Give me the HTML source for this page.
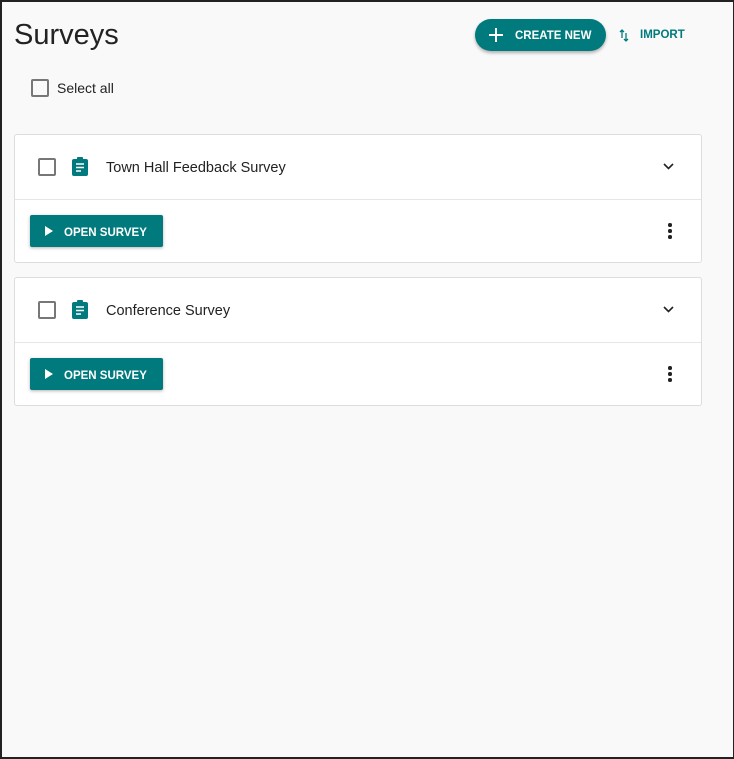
<!DOCTYPE html>
<html><head><style>
html,body{margin:0;padding:0}
body{width:734px;height:759px;background:#f9f9f9;font-family:"Liberation Sans",sans-serif;position:relative;overflow:hidden;color:#222}
.frame{position:absolute;left:0;top:0;width:734px;height:759px;box-sizing:border-box;border:2px solid #222;border-right-width:1px;pointer-events:none}
.abs{position:absolute}
h1{position:absolute;left:14px;top:19px;margin:0;font-weight:400;font-size:29px;color:#222}
.create{left:475px;top:19px;width:131px;height:32px;background:#007a7c;border-radius:16px;color:#fff;font-size:11.5px;font-weight:700;box-shadow:0 2px 3px rgba(0,0,0,.3)}
.create span{position:absolute;left:40px;top:10.5px}
.imp{top:29px;color:#007a7c;font-size:11.5px;font-weight:700}
.cb{width:14px;height:14px;border:2px solid #777;border-radius:2px;box-sizing:content-box}
.card{left:14px;width:686px;height:127px;background:#fff;border:1px solid #ddd;border-radius:3px}
.card .sep{position:absolute;left:0;right:0;top:64px;border-top:1px solid #e6e6e6}
.title{position:absolute;left:91px;top:25px;font-size:14.5px}
.open{position:absolute;left:15px;top:80px;width:133px;height:32px;background:#007a7c;border-radius:2px;color:#fff;font-size:11.5px;font-weight:700;box-shadow:0 1px 3px rgba(0,0,0,.3)}
.open span{position:absolute;left:34px;top:11.5px}
.dots{position:absolute;left:653px;top:88px;width:4px}
.dots i{display:block;width:3.5px;height:3.5px;background:#222;border-radius:50%;margin-bottom:2.5px}
</style></head><body>
<h1>Surveys</h1>
<div class="abs create"><svg class="abs" style="left:14px;top:9px" width="14" height="14"><path d="M7 0v14M0 7h14" stroke="#fff" stroke-width="2"/></svg><span>CREATE NEW</span></div>
<svg class="abs" style="left:619px;top:29px" width="10" height="13"><path d="M3 1v8M1 3l2-2 2 2M7 12V4M5 10l2 2 2-2" stroke="#007a7c" stroke-width="1.3" fill="none"/></svg>
<div class="abs imp" style="left:640px">IMPORT</div>
<div class="abs cb" style="left:31px;top:79px"></div>
<div class="abs" style="left:57px;top:80px;font-size:14px">Select all</div>

<div class="abs card" style="top:134px">
 <div class="abs cb" style="left:23px;top:23px"></div>
 <svg class="abs" style="left:56px;top:21px" width="18" height="20" viewBox="0 0 18 20"><rect x="1" y="3" width="16" height="17" rx="2" fill="#007a7c"/><rect x="6" y="1" width="6" height="4" rx="1" fill="#007a7c"/><path d="M5 8h8M5 11.5h8M5 15h5" stroke="#fff" stroke-width="1.6"/></svg>
 <div class="title">Town Hall Feedback Survey</div>
 <svg class="abs" style="left:648px;top:28px" width="11" height="8"><path d="M1 1l4.5 4.5L10 1" stroke="#222" stroke-width="1.6" fill="none"/></svg>
 <div class="sep"></div>
 <div class="open"><svg class="abs" style="left:15px;top:11px" width="8" height="10"><path d="M0 0l8 5-8 5z" fill="#fff"/></svg><span>OPEN SURVEY</span></div>
 <div class="dots"><i></i><i></i><i></i></div>
</div>

<div class="abs card" style="top:277px">
 <div class="abs cb" style="left:23px;top:23px"></div>
 <svg class="abs" style="left:56px;top:21px" width="18" height="20" viewBox="0 0 18 20"><rect x="1" y="3" width="16" height="17" rx="2" fill="#007a7c"/><rect x="6" y="1" width="6" height="4" rx="1" fill="#007a7c"/><path d="M5 8h8M5 11.5h8M5 15h5" stroke="#fff" stroke-width="1.6"/></svg>
 <div class="title">Conference Survey</div>
 <svg class="abs" style="left:648px;top:28px" width="11" height="8"><path d="M1 1l4.5 4.5L10 1" stroke="#222" stroke-width="1.6" fill="none"/></svg>
 <div class="sep"></div>
 <div class="open"><svg class="abs" style="left:15px;top:11px" width="8" height="10"><path d="M0 0l8 5-8 5z" fill="#fff"/></svg><span>OPEN SURVEY</span></div>
 <div class="dots"><i></i><i></i><i></i></div>
</div>
<div class="frame"></div>
</body></html>
